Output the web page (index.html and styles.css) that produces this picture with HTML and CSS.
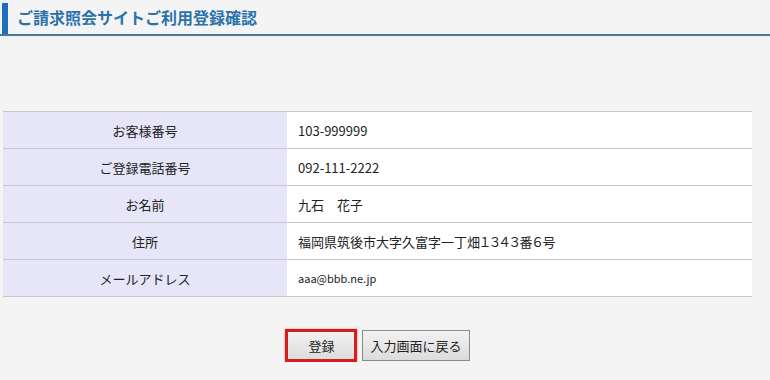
FILE: index.html
```html
<!DOCTYPE html>
<html lang="ja">
<head>
    <meta charset="UTF-8">
    <title>ご請求照会サイトご利用登録確認</title>
    <link rel="stylesheet" href="styles.css">
</head>
<body>
    <div class="page-title">
        <h1>ご請求照会サイトご利用登録確認</h1>
    </div>

    <div class="content">
        <table class="confirm-table">
            <tr>
                <th>お客様番号</th>
                <td>103-999999</td>
            </tr>
            <tr>
                <th>ご登録電話番号</th>
                <td>092-111-2222</td>
            </tr>
            <tr>
                <th>お名前</th>
                <td>九石　花子</td>
            </tr>
            <tr>
                <th>住所</th>
                <td class="address">福岡県筑後市大字久富字一丁畑１３４３番６号</td>
            </tr>
            <tr>
                <th>メールアドレス</th>
                <td class="mail">aaa@bbb.ne.jp</td>
            </tr>
        </table>

        <div class="buttons">
            <button class="btn btn-submit">登録</button>
            <button class="btn">入力画面に戻る</button>
        </div>
    </div>
</body>
</html>
```

FILE: styles.css
```css
body {
    margin: 0;
    padding: 0;
    background-color: #f4f4f4;
    font-family: "Noto Sans CJK JP", "DejaVu Sans", sans-serif;
    color: #222;
}
.page-title {
    padding-top: 3px;
    border-bottom: 2px solid #4a7a9a;
    box-shadow: 0 2px 0 #e8f4f8;
}
.page-title h1 {
    margin: 0 0 0 2px;
    height: 31px;
    line-height: 29px;
    border-left: 6px solid #1f6fb8;
    padding-left: 9px;
    font-size: 16px;
    font-weight: bold;
    color: #2b72ab;
}
.content {
    padding: 75px 18px 0 3px;
}
.confirm-table {
    width: 100%;
    border-collapse: collapse;
    font-size: 13px;
}
.confirm-table th,
.confirm-table td {
    height: 36px;
    padding: 0;
    border-top: 1px solid #c8c8c8;
    border-bottom: 1px solid #c8c8c8;
}
.confirm-table th {
    width: 284px;
    background-color: #e6e6f8;
    font-weight: normal;
    text-align: center;
}
.confirm-table td {
    background-color: #fff;
    padding-left: 11px;
}
.confirm-table td.address {
    font-feature-settings: "palt";
}
.confirm-table td.mail {
    font-size: 11px;
}
.buttons {
    display: flex;
    justify-content: center;
    align-items: center;
    gap: 5px;
    margin-top: 32px;
}
.btn {
    font-family: inherit;
    font-size: 13px;
    color: #222;
    height: 31px;
    padding: 0 7px;
    border: 1px solid #8a8a8a;
    background: linear-gradient(#f2f2f2, #dcdcdc);
}
.btn-submit {
    width: 72px;
    height: 33px;
    border: 3px solid #d41d1d;
    box-shadow: 0 0 2px rgba(212, 29, 29, 0.5);
}
```
